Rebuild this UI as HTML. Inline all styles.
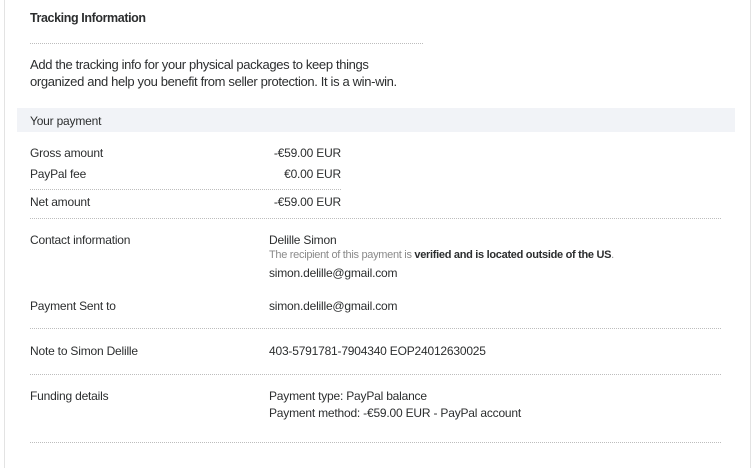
<!DOCTYPE html>
<html><head><meta charset="utf-8"><style>
body{margin:0;width:753px;height:458px;background:#fff;font-family:"Liberation Sans",sans-serif;color:#2c2e2f;overflow:hidden;position:relative}
.card{position:absolute;left:4px;top:-2px;width:745px;height:470px;border-left:1px solid #e3e3e3;border-right:1px solid #e3e3e3}
.t{position:absolute;white-space:nowrap;font-size:12px;letter-spacing:-0.2px}
.dl{position:absolute;height:0;border-top:1px dotted #bdbdbd}
.r{text-align:right}
</style></head><body>
<div class="card"></div>
<div class="t" style="left:30px;top:11px;font-weight:bold;font-size:12.5px;letter-spacing:-0.4px">Tracking Information</div>
<div class="dl" style="left:30px;top:43px;width:393px"></div>
<div class="t" style="left:30px;top:56px;font-size:13px;letter-spacing:-0.35px;line-height:17px">Add the tracking info for your physical packages to keep things<br>organized and help you benefit from seller protection. It is a win-win.</div>
<div style="position:absolute;left:17px;top:108px;width:718px;height:24px;background:#f1f3f7"></div>
<div class="t" style="left:30px;top:114px">Your payment</div>
<div class="t" style="left:30px;top:146px">Gross amount</div>
<div class="t r" style="left:240px;width:101px;top:146px">-€59.00 EUR</div>
<div class="t" style="left:30px;top:167px">PayPal fee</div>
<div class="t r" style="left:240px;width:101px;top:167px">€0.00 EUR</div>
<div class="dl" style="left:30px;top:189px;width:311px"></div>
<div class="t" style="left:30px;top:195px">Net amount</div>
<div class="t r" style="left:240px;width:101px;top:195px">-€59.00 EUR</div>
<div class="dl" style="left:30px;top:218px;width:691px"></div>
<div class="t" style="left:30px;top:233px">Contact information</div>
<div class="t" style="left:269px;top:233px">Delille Simon</div>
<div class="t" style="left:269px;top:249px;font-size:11px;color:#8a8a8a;letter-spacing:-0.3px">The recipient of this payment is <b style="color:#2c2e2f">verified and is located outside of the US</b>.</div>
<div class="t" style="left:269px;top:266px">simon.delille@gmail.com</div>
<div class="t" style="left:30px;top:299px">Payment Sent to</div>
<div class="t" style="left:269px;top:299px">simon.delille@gmail.com</div>
<div class="dl" style="left:30px;top:328px;width:691px"></div>
<div class="t" style="left:30px;top:344px">Note to Simon Delille</div>
<div class="t" style="left:269px;top:344px">403-5791781-7904340 EOP24012630025</div>
<div class="dl" style="left:30px;top:374px;width:691px"></div>
<div class="t" style="left:30px;top:389px">Funding details</div>
<div class="t" style="left:269px;top:389px">Payment type: PayPal balance</div>
<div class="t" style="left:269px;top:406px">Payment method: -€59.00 EUR - PayPal account</div>
<div class="dl" style="left:30px;top:442px;width:691px"></div>
</body></html>
